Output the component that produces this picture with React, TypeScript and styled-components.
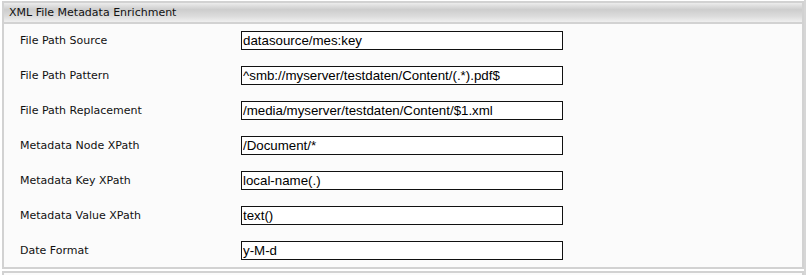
import React from "react";
import styled, { createGlobalStyle } from "styled-components";

const Global = createGlobalStyle`
  html, body { margin: 0; padding: 0; background: #ffffff; }
  body { font-family: Verdana, "DejaVu Sans", sans-serif; overflow: hidden; }
`;

const Page = styled.div`
  width: 806px;
  height: 275px;
  border-right: 2px solid #d6d6d6;
  padding: 1px 0 0 2px;
  box-sizing: border-box;
  display: flex;
  flex-direction: column;
  gap: 2px;
`;

const Panel = styled.section`
  width: 802px;
  box-sizing: border-box;
  border: 2px solid #d2d2d2;
  background: #fbfbfb;
`;

const NextPanel = styled.div`
  width: 802px;
  height: 10px;
  box-sizing: border-box;
  border: 2px solid #d2d2d2;
  border-bottom: none;
  background: #fbfbfb;
`;

const Header = styled.div`
  height: 19px;
  border-bottom: 2px solid #d2d2d2;
  background: linear-gradient(#ececec 0%, #cdcdcd 35%, #dcdcdc 70%, #efefef 100%);
  display: flex;
  align-items: center;
  padding-left: 5px;
  font-family: "DejaVu Sans", Verdana, sans-serif;
  font-size: 11px;
  color: #111;
`;

const Body = styled.div`
  display: flex;
  flex-direction: column;
  gap: 16px;
  padding: 7px 0 7px 16px;
`;

const Row = styled.div`
  display: grid;
  grid-template-columns: 221px 322px;
  align-items: center;
  height: 19px;
`;

const Label = styled.label`
  font-family: "DejaVu Sans", Verdana, sans-serif;
  font-size: 11px;
  color: #111;
`;

const Field = styled.input`
  box-sizing: border-box;
  width: 322px;
  height: 19px;
  border: 1.5px solid #111;
  background: #fff;
  margin: 0;
  padding: 0 1px;
  font-family: "Liberation Sans", Arial, sans-serif;
  font-size: 13.3px;
  color: #000;
  outline: none;
`;

const rows: [string, string][] = [
  ["File Path Source", "datasource/mes:key"],
  ["File Path Pattern", "^smb://myserver/testdaten/Content/(.*).pdf$"],
  ["File Path Replacement", "/media/myserver/testdaten/Content/$1.xml"],
  ["Metadata Node XPath", "/Document/*"],
  ["Metadata Key XPath", "local-name(.)"],
  ["Metadata Value XPath", "text()"],
  ["Date Format", "y-M-d"],
];

export default function App() {
  return (
    <>
      <Global />
      <Page>
        <Panel>
          <Header>XML File Metadata Enrichment</Header>
          <Body>
            {rows.map(([l, v]) => (
              <Row key={l}>
                <Label>{l}</Label>
                <Field defaultValue={v} readOnly />
              </Row>
            ))}
          </Body>
        </Panel>
        <NextPanel />
      </Page>
    </>
  );
}
